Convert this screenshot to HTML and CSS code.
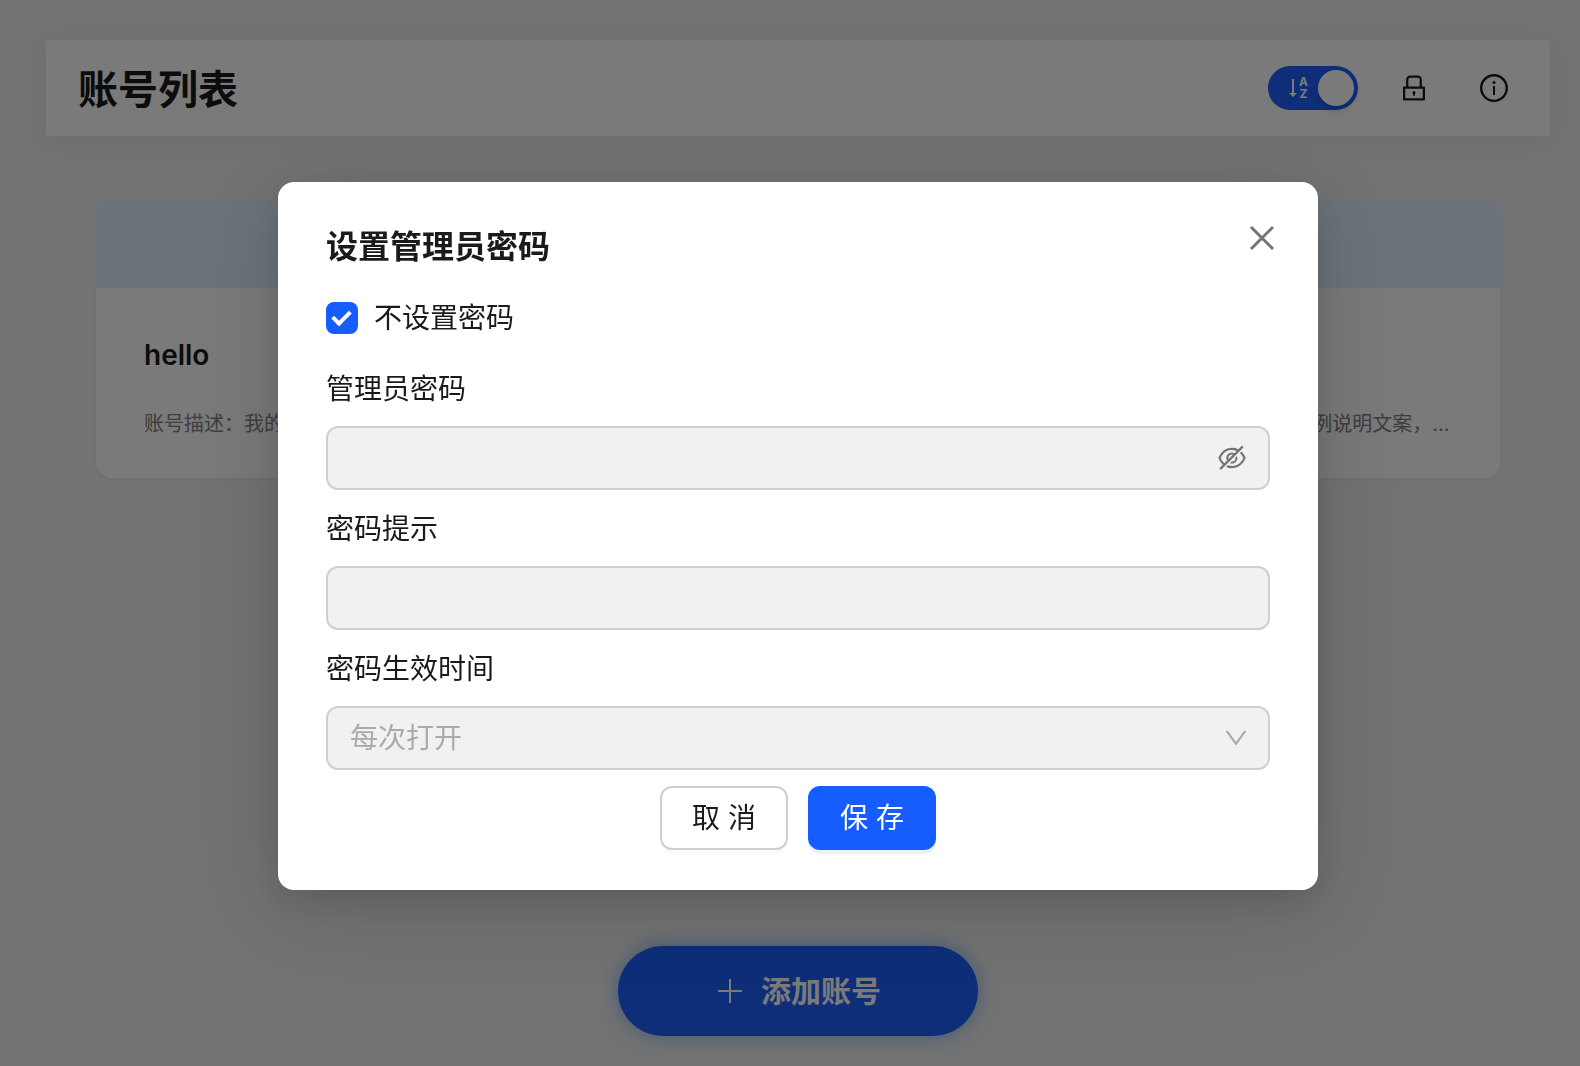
FILE: index.html
```html
<!DOCTYPE html>
<html lang="zh-CN">
<head>
    <meta charset="UTF-8">
    <meta name="viewport" content="width=device-width, initial-scale=1.0">
    <title>账号列表</title>
    <link rel="stylesheet" href="styles.css">
</head>
<body>
    <header class="header">
        <h1>账号列表</h1>
        <div class="actions">
            <button class="switch" type="button" role="switch" aria-checked="true" aria-label="排序">
                <span class="sort-icon">
                    <svg width="8" height="20" viewBox="0 0 8 20"><path d="M3 1h2v14h3l-4 4-4-4h3z" fill="currentColor"/></svg>
                    <span class="sort-letters"><span>A</span><span>Z</span></span>
                </span>
                <span class="knob"></span>
            </button>
            <button class="icon-btn" type="button" aria-label="锁定">
                <svg width="32" height="32" viewBox="0 0 1024 1024" fill="currentColor"><path d="M832 464h-68V240c0-70.7-57.3-128-128-128H388c-70.7 0-128 57.3-128 128v224h-68c-17.7 0-32 14.3-32 32v384c0 17.7 14.3 32 32 32h640c17.7 0 32-14.3 32-32V496c0-17.7-14.3-32-32-32zM332 240c0-30.9 25.1-56 56-56h248c30.9 0 56 25.1 56 56v224H332V240zm460 600H232V536h560v304zM484 701v53c0 4.4 3.6 8 8 8h40c4.4 0 8-3.6 8-8v-53a48.01 48.01 0 10-56 0z"/></svg>
            </button>
            <button class="icon-btn" type="button" aria-label="关于">
                <svg width="32" height="32" viewBox="0 0 1024 1024" fill="currentColor"><path d="M512 64C264.6 64 64 264.6 64 512s200.6 448 448 448 448-200.6 448-448S759.4 64 512 64zm0 820c-205.4 0-372-166.6-372-372s166.6-372 372-372 372 166.6 372 372-166.6 372-372 372z"/><path d="M464 336a48 48 0 1096 0 48 48 0 10-96 0zm72 112h-48c-4.4 0-8 3.6-8 8v272c0 4.4 3.6 8 8 8h48c4.4 0 8-3.6 8-8V456c0-4.4-3.6-8-8-8z"/></svg>
            </button>
        </div>
    </header>

    <main class="list">
        <article class="card">
            <div class="card-head"></div>
            <div class="card-body">
                <h2>hello</h2>
                <p>账号描述：我的账号示例说明文案，我的账号示例说明文案，我的账号示例说明文案，我的账号示例说明文案，我的常用邮箱账号1示例说明文案，...</p>
            </div>
        </article>
    </main>

    <footer class="footer">
        <button class="add-btn" type="button">
            <svg width="28" height="28" viewBox="0 0 28 28" stroke="currentColor" stroke-width="2"><path d="M15 2v24M3 14h24"/></svg>
            添加账号
        </button>
    </footer>

    <div class="mask">
        <div class="modal" role="dialog" aria-modal="true" aria-labelledby="modal-title">
            <button class="close" type="button" aria-label="关闭">
                <svg width="32" height="32" viewBox="0 0 32 32" stroke="currentColor" stroke-width="3"><path d="M5 5l22 22M27 5L5 27"/></svg>
            </button>
            <h2 id="modal-title">设置管理员密码</h2>
            <form>
                <div class="check-item">
                    <input type="checkbox" id="no-password" checked>
                    <label for="no-password">不设置密码</label>
                </div>
                <div class="item">
                    <label for="password">管理员密码</label>
                    <div class="field">
                        <input type="password" id="password" disabled>
                        <svg class="field-icon" width="32" height="32" viewBox="0 0 1024 1024" fill="currentColor"><path d="M942.2 486.2Q889.47 375.11 816.7 305l-50.88 50.88C807.31 395.53 843.45 447.4 874.7 512 791.5 684.2 673.4 766 512 766q-72.67 0-133.87-22.38L323 798.75Q408 838 512 838q288.3 0 430.2-300.3a60.29 60.29 0 000-51.5zm-63.57-320.64L836 122.88a8 8 0 00-11.32 0L715.31 232.2Q624.86 186 512 186q-288.3 0-430.2 300.3a60.3 60.3 0 000 51.5q56.69 119.4 136.5 191.41L112.48 835a8 8 0 000 11.31L155.17 889a8 8 0 0011.31 0l712.15-712.12a8 8 0 000-11.32zM149.3 512C232.6 339.8 350.7 258 512 258c54.54 0 104.13 9.36 149.12 28.39l-70.3 70.3a176 176 0 00-238.13 238.13l-83.42 83.42C223.1 637.49 183.3 582.28 149.3 512zm246.7 0a112.11 112.11 0 01146.2-106.69L401.31 546.2A112 112 0 01396 512z"/><path d="M508 624c-3.46 0-6.87-.16-10.25-.47l-52.82 52.82a176.09 176.09 0 00227.42-227.42l-52.82 52.82c.31 3.38.47 6.79.47 10.25a111.94 111.94 0 01-112 112z"/></svg>
                    </div>
                </div>
                <div class="item">
                    <label for="hint">密码提示</label>
                    <div class="field">
                        <input type="text" id="hint" disabled>
                    </div>
                </div>
                <div class="item">
                    <label for="period">密码生效时间</label>
                    <div class="field">
                        <select id="period" disabled>
                            <option>每次打开</option>
                        </select>
                        <svg class="field-icon arrow" width="28" height="28" viewBox="0 0 1024 1024" fill="currentColor"><path d="M884 256h-75c-5.1 0-9.9 2.5-12.9 6.6L512 654.2 227.9 262.6c-3-4.1-7.8-6.6-12.9-6.6h-75c-6.5 0-10.3 7.4-6.5 12.7l352.6 486.1c12.8 17.6 39 17.6 51.7 0l352.6-486.1c3.9-5.3.1-12.7-6.4-12.7z"/></svg>
                    </div>
                </div>
                <div class="buttons">
                    <button class="btn" type="button">取 消</button>
                    <button class="btn primary" type="submit">保 存</button>
                </div>
            </form>
        </div>
    </div>
</body>
</html>
```

FILE: styles.css
```css
:root { --primary: #155dff; --accent: #1f60ff; --text: #1a1a1a; --border: #cfcfcf; --disabled: #f1f1f1; }
*, *::after { box-sizing: border-box; }
body { margin: 0; min-height: 100vh; padding: 40px 30px 30px 46px; display: flex; flex-direction: column; font-family: Inter, "Noto Sans CJK SC", sans-serif; font-size: 28px; color: var(--text); background: #f0f0f0; }
h1, h2, p { margin: 0; }
button, input, select { font: inherit; color: inherit; }
button { padding: 0; border: none; background: none; cursor: pointer; }
svg { display: block; }

.header { display: flex; align-items: center; justify-content: space-between; height: 96px; padding: 0 40px 0 32px; background: #fff; box-shadow: 0 4px 24px rgba(0, 0, 0, 0.05); }
.header h1 { padding-top: 4px; font-size: 40px; line-height: 56px; font-weight: 700; }
.actions { display: flex; align-items: center; gap: 48px; }
.actions .switch { margin-right: -8px; }
.switch { display: flex; align-items: center; justify-content: space-between; width: 90px; height: 44px; padding: 0 4px 0 21px; border-radius: 22px; background: var(--accent); color: #fff; }
.sort-icon { display: flex; align-items: center; gap: 2px; }
.sort-letters { display: flex; flex-direction: column; font-size: 12px; line-height: 12px; font-weight: 700; }
.knob { width: 36px; height: 36px; border-radius: 50%; background: #fff; box-shadow: 0 4px 8px rgba(0, 35, 11, 0.2); }

.list { flex: 1; padding: 64px 50px; }
.card { border-radius: 16px; background: #fff; box-shadow: 0 2px 4px rgba(0, 0, 0, 0.04); }
.card-head { height: 88px; margin: 0 -2px; border-radius: 16px 16px 0 0; background: #e1f1ff; }
.card-body { padding: 48px 48px 40px; }
.card-body h2 { margin-bottom: 36px; font-size: 28px; line-height: 38px; font-weight: 600; }
.card-body p { overflow: hidden; font-size: 20px; line-height: 28px; color: #808080; white-space: nowrap; text-overflow: ellipsis; }

.footer { display: flex; justify-content: center; }
.add-btn { display: flex; align-items: center; justify-content: center; gap: 18px; width: 360px; height: 90px; border-radius: 45px; background: var(--accent); color: #fff; font-size: 30px; line-height: 40px; font-weight: 700; box-shadow: 0 0 20px rgba(21, 119, 255, 0.5); }

.mask { position: fixed; inset: 0; padding: 182px 0 30px 16px; overflow: auto; background: rgba(0, 0, 0, 0.52); }
.modal { position: relative; max-width: 1040px; margin: 0 auto; padding: 40px 48px; border-radius: 16px; background: #fff; box-shadow: 0 12px 32px rgba(0, 0, 0, 0.12), 0 16px 96px 16px rgba(0, 0, 0, 0.12); }
.modal h2 { margin-bottom: 14px; font-size: 32px; line-height: 50px; font-weight: 700; }
.close { position: absolute; top: 40px; right: 40px; color: #757575; }
.check-item { display: flex; align-items: center; gap: 16px; height: 64px; margin-bottom: 16px; }
.check-item label { line-height: 44px; }
.check-item input { position: relative; appearance: none; width: 32px; height: 32px; margin: 0; border-radius: 8px; border: 2px solid var(--border); }
.check-item input:checked { border-color: var(--primary); background: var(--primary); }
.check-item input:checked::after { content: ""; position: absolute; top: 3px; left: 8px; width: 11px; height: 18px; border: solid #fff; border-width: 0 4px 4px 0; transform: rotate(45deg); }
.item { margin-bottom: 16px; }
.item label { display: block; margin-bottom: 14px; line-height: 46px; }
.field { position: relative; }
.field input, .field select { display: block; appearance: none; width: 100%; height: 64px; padding: 0 22px; border: 2px solid var(--border); border-radius: 12px; background: var(--disabled); color: #aaa; opacity: 1; }
.field-icon { position: absolute; top: 16px; right: 22px; color: #757575; pointer-events: none; }
.arrow { top: 18px; right: 20px; color: #aaa; }
.buttons { display: flex; justify-content: center; gap: 20px; }
.btn { width: 128px; height: 64px; border: 2px solid var(--border); border-radius: 12px; background: #fff; line-height: 44px; box-shadow: 0 4px 0 rgba(0, 0, 0, 0.02); }
.btn.primary { border-color: var(--primary); background: var(--primary); color: #fff; box-shadow: 0 4px 0 rgba(5, 125, 255, 0.1); }
```
